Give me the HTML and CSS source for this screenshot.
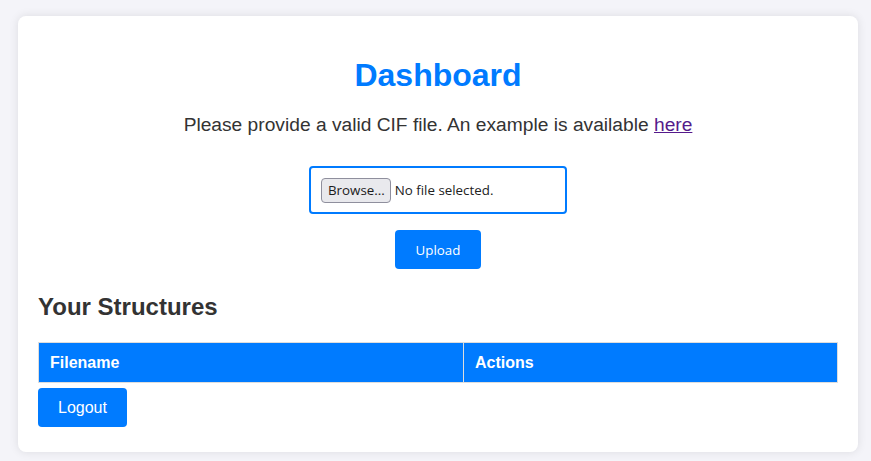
FILE: index.html
```html
<!DOCTYPE html>
<html>
<head>
<meta charset="utf-8">
<link rel="stylesheet" href="styles.css">
</head>
<body>
<div class="card">
  <h1 class="title">Dashboard</h1>
  <p class="intro">Please provide a valid CIF file. An example is available <a class="link" href="#">here</a></p>
  <form class="upload-form">
    <div class="file-box">
      <span class="browse">Browse...</span>
      <span class="file-status">No file selected.</span>
    </div>
    <button type="button" class="btn-upload">Upload</button>
  </form>
  <h2 class="section-title">Your Structures</h2>
  <table class="table">
    <thead>
      <tr><th class="col-file">Filename</th><th>Actions</th></tr>
    </thead>
  </table>
  <button type="button" class="btn-logout">Logout</button>
</div>
</body>
</html>
```
FILE: styles.css
```css
html, body {
  margin: 0;
  padding: 0;
}
body {
  background: #f4f4f9;
  font-family: "Liberation Sans", Arial, sans-serif;
  color: #333;
  padding: 16px 0 10px 18px;
}
.card {
  width: 800px;
  background: #fff;
  border-radius: 8px;
  box-shadow: 0 0 10px rgba(0, 0, 0, 0.1);
  padding: 20px 20px 25px 20px;
}
.title {
  margin: 21px 0 20px;
  font-size: 32px;
  color: #007bff;
  text-align: center;
  font-weight: bold;
}
.intro {
  margin: 0;
  font-size: 19.2px;
  text-align: center;
}
.link {
  color: #551a8b;
}
.upload-form {
  display: flex;
  flex-direction: column;
  align-items: center;
  margin-top: 30px;
  gap: 16px;
}
.file-box {
  width: 234px;
  border: 2px solid #007bff;
  border-radius: 4px;
  padding: 10px;
  display: flex;
  align-items: center;
  gap: 4px;
  font-family: "Open Sans", "Noto Sans", sans-serif;
  font-size: 13.33px;
  color: #222;
  height: 24px;
}
.browse {
  background: #e9e9ed;
  border: 1px solid #8f8f9d;
  border-radius: 4px;
  padding: 0 5px 0 6px;
  box-sizing: border-box;
  height: 25px;
  display: inline-flex;
  align-items: center;
  color: #1b1b1b;
}
.btn-upload {
  background: #007bff;
  color: #fff;
  border: none;
  border-radius: 4px;
  font-family: "Open Sans", "Noto Sans", sans-serif;
  font-size: 13.33px;
  padding: 11px 21px 9px;
  line-height: 19px;
}
.section-title {
  font-size: 24px;
  margin: 24px 0 21px;
  font-weight: bold;
}
.table {
  width: 100%;
  border-collapse: collapse;
}
.table th {
  background: #007bff;
  color: #fff;
  border: 1px solid #ddd;
  padding: 10px 11px;
  text-align: left;
  font-size: 16px;
  line-height: 19px;
}
.table .col-file {
  width: 402px;
}
.btn-logout {
  display: block;
  margin-top: 5px;
  background: #007bff;
  color: #fff;
  border: none;
  border-radius: 4px;
  font-family: "Liberation Sans", Arial, sans-serif;
  font-size: 16px;
  line-height: 19px;
  padding: 10px 20px;
}
```
